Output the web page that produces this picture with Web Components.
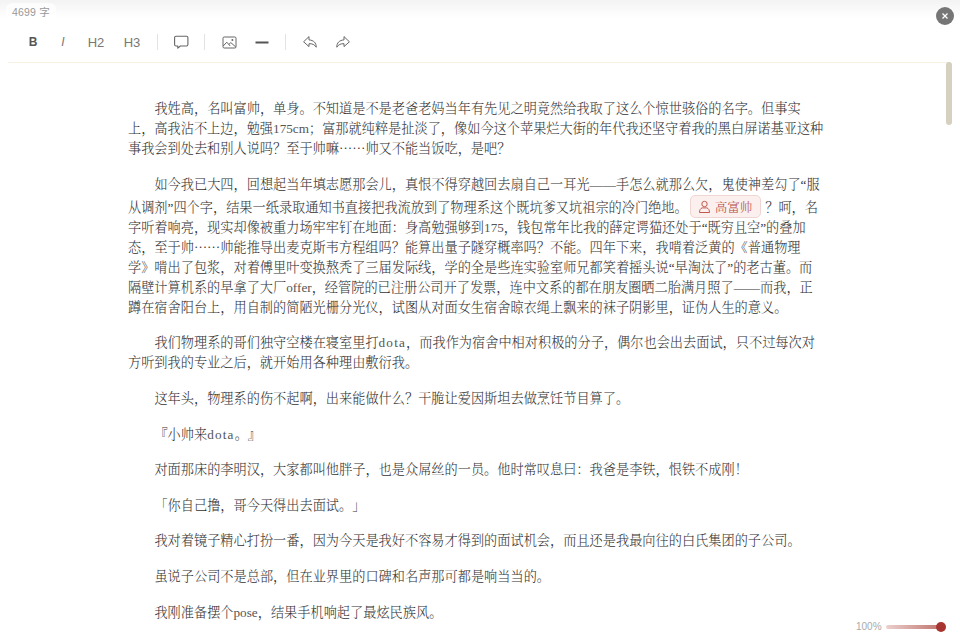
<!DOCTYPE html>
<html lang="zh-CN">
<head>
<meta charset="utf-8">
<title>editor</title>
<style>
  html, body { margin: 0; height: 100%; background: #fff; overflow: hidden; }
  .dots { font-family: "Noto Sans CJK SC", sans-serif; line-height: 0; }
  .lat { color: #555; }
  .wide { letter-spacing: 1.2px; }
</style>
</head>
<body>
<editor-app>
  <editor-toolbar slot="toolbar">
    <tool-button label="B" kind="bold" width="30"></tool-button>
    <tool-button label="I" kind="italic" width="30"></tool-button>
    <tool-button label="H2" width="36"></tool-button>
    <tool-button label="H3" width="36"></tool-button>
    <tool-sep></tool-sep>
    <tool-button icon="comment" width="32"></tool-button>
    <tool-sep></tool-sep>
    <tool-button icon="image" width="34"></tool-button>
    <tool-button icon="rule" width="32"></tool-button>
    <tool-sep></tool-sep>
    <tool-button icon="undo" width="34"></tool-button>
    <tool-button icon="redo" width="32"></tool-button>
  </editor-toolbar>
  <story-page>
    <story-para>我姓高，名叫富帅，单身。不知道是不是老爸老妈当年有先见之明竟然给我取了这么个惊世骇俗的名字。但事实上，高我沾不上边，勉强<span class="lat">175cm</span>；富那就纯粹是扯淡了，像如今这个苹果烂大街的年代我还坚守着我的黑白屏诺基亚这种事我会到处去和别人说吗？至于帅嘛<span class="dots">……</span>帅又不能当饭吃，是吧？</story-para>
    <story-para>如今我已大四，回想起当年填志愿那会儿，真恨不得穿越回去扇自己一耳光——手怎么就那么欠，鬼使神差勾了“服从调剂”四个字，结果一纸录取通知书直接把我流放到了物理系这个既坑爹又坑祖宗的冷门绝地。<person-chip>高富帅</person-chip>？呵，名字听着响亮，现实却像被重力场牢牢钉在地面：身高勉强够到<span class="lat">175</span>，钱包常年比我的薛定谔猫还处于“既穷且空”的叠加态，至于帅<span class="dots">……</span>帅能推导出麦克斯韦方程组吗？能算出量子隧穿概率吗？不能。四年下来，我啃着泛黄的《普通物理学》啃出了包浆，对着傅里叶变换熬秃了三届发际线，学的全是些连实验室师兄都笑着摇头说“早淘汰了”的老古董。而隔壁计算机系的早拿了大厂<span class="lat">offer</span>，经管院的已注册公司开了发票，连中文系的都在朋友圈晒二胎满月照了——而我，正蹲在宿舍阳台上，用自制的简陋光栅分光仪，试图从对面女生宿舍晾衣绳上飘来的袜子阴影里，证伪人生的意义。</story-para>
    <story-para>我们物理系的哥们独守空楼在寝室里打<span class="lat wide">dota</span>，而我作为宿舍中相对积极的分子，偶尔也会出去面试，只不过每次对方听到我的专业之后，就开始用各种理由敷衍我。</story-para>
    <story-para>这年头，物理系的伤不起啊，出来能做什么？干脆让爱因斯坦去做烹饪节目算了。</story-para>
    <story-para>『小帅来<span class="lat wide">dota</span>。』</story-para>
    <story-para>对面那床的李明汉，大家都叫他胖子，也是众屌丝的一员。他时常叹息曰：我爸是李铁，恨铁不成刚！</story-para>
    <story-para>「你自己撸，哥今天得出去面试。」</story-para>
    <story-para>我对着镜子精心打扮一番，因为今天是我好不容易才得到的面试机会，而且还是我最向往的白氏集团的子公司。</story-para>
    <story-para>虽说子公司不是总部，但在业界里的口碑和名声那可都是响当当的。</story-para>
    <story-para>我刚准备摆个<span class="lat">pose</span>，结果手机响起了最炫民族风。</story-para>
  </story-page>
  <word-count slot="overlay" count="4699"></word-count>
  <close-button slot="overlay"></close-button>
  <scroll-thumb slot="overlay"></scroll-thumb>
  <zoom-control slot="overlay" value="100"></zoom-control>
</editor-app>

<script>
const uiFont = '"Liberation Sans", "Noto Sans CJK SC", sans-serif';

const icons = {
  comment: `<svg width="16" height="16" viewBox="0 0 16 16" fill="none" stroke="#666" stroke-width="1.1" stroke-linejoin="round"><path d="M3 2.2h10.5a1.4 1.4 0 0 1 1.4 1.4v7a1.4 1.4 0 0 1-1.4 1.4H7.4l-2.6 2.2V12H3a1.4 1.4 0 0 1-1.4-1.4v-7A1.4 1.4 0 0 1 3 2.2z"/></svg>`,
  image: `<svg width="15" height="15" viewBox="0 0 15 15" fill="none" stroke="#666" stroke-width="1"><rect x="1" y="2" width="13" height="11" rx="1.2"/><circle cx="10.4" cy="5" r="1" fill="#666" stroke="none"/><path d="M1.2 11l3.6-3.8 3.4 3.8M6.8 9.4l2-1.8 5 4.4"/></svg>`,
  rule: `<svg width="14" height="14" viewBox="0 0 14 14"><rect x="0.5" y="6.5" width="13" height="2" fill="#555"/></svg>`,
  undo: `<svg width="16" height="16" viewBox="0 0 16 16" fill="none" stroke="#666" stroke-width="1" stroke-linejoin="round"><path d="M7 2.6L1.6 7.8 7 12.6V9.7c3.2-.2 5.6.9 7.2 3.5.2-4.3-2.6-7-7.2-7.3z"/></svg>`,
  redo: `<svg width="16" height="16" viewBox="0 0 16 16" fill="none" stroke="#666" stroke-width="1" stroke-linejoin="round"><path d="M9 2.6l5.4 5.2L9 12.6V9.7c-3.2-.2-5.6.9-7.2 3.5-.2-4.3 2.6-7 7.2-7.3z"/></svg>`
};

class EditorApp extends HTMLElement {
  constructor() {
    super();
    this.attachShadow({ mode: "open" }).innerHTML = `
      <style>
        :host { display: block; position: relative; width: 960px; height: 640px; overflow: hidden; background: #fff; }
        .strip { height: 18px; background: linear-gradient(#f3f3f3, #fff); }
        .bar { margin: 0 9px 0 8px; border-bottom: 1px solid #f6f0e2; }
      </style>
      <div class="strip"></div>
      <div class="bar"><slot name="toolbar"></slot></div>
      <slot></slot>
      <slot name="overlay"></slot>
    `;
  }
}

class EditorToolbar extends HTMLElement {
  constructor() {
    super();
    this.attachShadow({ mode: "open" }).innerHTML = `
      <style>
        :host { display: flex; align-items: center; height: 40px; padding: 4px 0 0 10px; }
      </style>
      <slot></slot>
    `;
  }
}

class ToolButton extends HTMLElement {
  constructor() {
    super();
    this.attachShadow({ mode: "open" }).innerHTML = `
      <style>
        :host { display: flex; align-items: center; justify-content: center; height: 24px; flex: none; font: 13px ${uiFont}; color: #777; }
        :host([kind="bold"]) { font-weight: bold; font-size: 12px; color: #555; }
        :host([kind="italic"]) { font-style: italic; font-size: 12px; }
        svg { display: block; }
      </style>
      <span class="content"></span>
    `;
  }

  connectedCallback() {
    this.style.width = this.getAttribute("width") + "px";
    const content = this.shadowRoot.querySelector(".content");
    const icon = this.getAttribute("icon");
    if (icon) content.innerHTML = icons[icon];
    else content.textContent = this.getAttribute("label");
  }
}

class ToolSep extends HTMLElement {
  constructor() {
    super();
    this.attachShadow({ mode: "open" }).innerHTML = `
      <style>
        :host { display: block; flex: none; width: 1px; height: 16px; margin: 0 7px; background: #e2e2e2; }
      </style>
    `;
  }
}

class StoryPage extends HTMLElement {
  constructor() {
    super();
    this.attachShadow({ mode: "open" }).innerHTML = `
      <style>
        :host { display: block; width: 697px; padding: 36px 0 0 128px; font: 13.2px/20px "Liberation Serif", "Noto Serif CJK SC", "Noto Sans CJK SC", serif; font-weight: 300; color: #333; text-spacing-trim: space-all; }
      </style>
      <slot></slot>
    `;
  }
}

class StoryPara extends HTMLElement {
  constructor() {
    super();
    this.attachShadow({ mode: "open" }).innerHTML = `
      <style>
        :host { display: block; margin-bottom: 15.6px; text-indent: 2em; text-align: left; }
      </style>
      <slot></slot>
    `;
  }
}

class PersonChip extends HTMLElement {
  constructor() {
    super();
    this.attachShadow({ mode: "open" }).innerHTML = `
      <style>
        :host { display: inline-block; box-sizing: border-box; height: 23px; padding: 2.3px 8px 0 7px; margin: 0 4px 0 2px; text-indent: 0; border: 1px solid #efd6d3; border-radius: 5px; background: #fbf0ee; color: #b5483f; font-size: 12.5px; line-height: 20px; }
        svg { vertical-align: -2px; margin-right: 4px; }
      </style>
      <svg width="13" height="14" viewBox="0 0 13 14" fill="none" stroke="#c2594f" stroke-width="1"><circle cx="6.5" cy="4" r="2.7"/><path d="M1.5 12.5h10c0-2.6-1-4-2.6-4.6H4.1c-1.6.6-2.6 2-2.6 4.6z"/></svg><slot></slot>
    `;
  }
}

class WordCount extends HTMLElement {
  constructor() {
    super();
    this.attachShadow({ mode: "open" }).innerHTML = `
      <style>
        :host { position: absolute; left: 6px; top: 3px; display: block; padding: 2px 6px 0; height: 13px; border-radius: 6px 6px 0 0; background: rgba(255,255,255,.7); font: 10.5px/15px ${uiFont}; color: #999; letter-spacing: .2px; }
      </style>
      <span></span>
    `;
  }

  connectedCallback() {
    this.shadowRoot.querySelector("span").textContent = this.getAttribute("count") + " 字";
  }
}

class CloseButton extends HTMLElement {
  constructor() {
    super();
    this.attachShadow({ mode: "open" }).innerHTML = `
      <style>
        :host { position: absolute; left: 936px; top: 7px; display: flex; align-items: center; justify-content: center; width: 18px; height: 18px; border-radius: 50%; background: #767676; }
      </style>
      <svg width="8" height="8" viewBox="0 0 8 8" stroke="#fff" stroke-width="1.3"><path d="M1.5 1.5l5 5M6.5 1.5l-5 5"/></svg>
    `;
  }
}

class ScrollThumb extends HTMLElement {
  constructor() {
    super();
    this.attachShadow({ mode: "open" }).innerHTML = `
      <style>
        :host { position: absolute; left: 946px; top: 62px; display: block; width: 6px; height: 63px; border-radius: 3px; background: #d6d0c0; }
      </style>
    `;
  }
}

class ZoomControl extends HTMLElement {
  constructor() {
    super();
    this.attachShadow({ mode: "open" }).innerHTML = `
      <style>
        :host { position: absolute; left: 856px; top: 620px; display: flex; align-items: center; gap: 6px; height: 14px; font: 10px ${uiFont}; color: #aaa; }
        .value { width: 24px; position: relative; top: -0.5px; }
        .track { position: relative; width: 55px; height: 4px; border-radius: 2px; background: linear-gradient(90deg, #ecd0ce, #c0736d); }
        .knob { position: absolute; right: -5px; top: -3px; width: 10px; height: 10px; border-radius: 50%; background: #a63531; }
      </style>
      <span class="value"></span>
      <div class="track"><div class="knob"></div></div>
    `;
  }

  connectedCallback() {
    this.shadowRoot.querySelector(".value").textContent = this.getAttribute("value") + "%";
  }
}

customElements.define("editor-app", EditorApp);
customElements.define("editor-toolbar", EditorToolbar);
customElements.define("tool-button", ToolButton);
customElements.define("tool-sep", ToolSep);
customElements.define("story-page", StoryPage);
customElements.define("story-para", StoryPara);
customElements.define("person-chip", PersonChip);
customElements.define("word-count", WordCount);
customElements.define("close-button", CloseButton);
customElements.define("scroll-thumb", ScrollThumb);
customElements.define("zoom-control", ZoomControl);
</script>
</body>
</html>
